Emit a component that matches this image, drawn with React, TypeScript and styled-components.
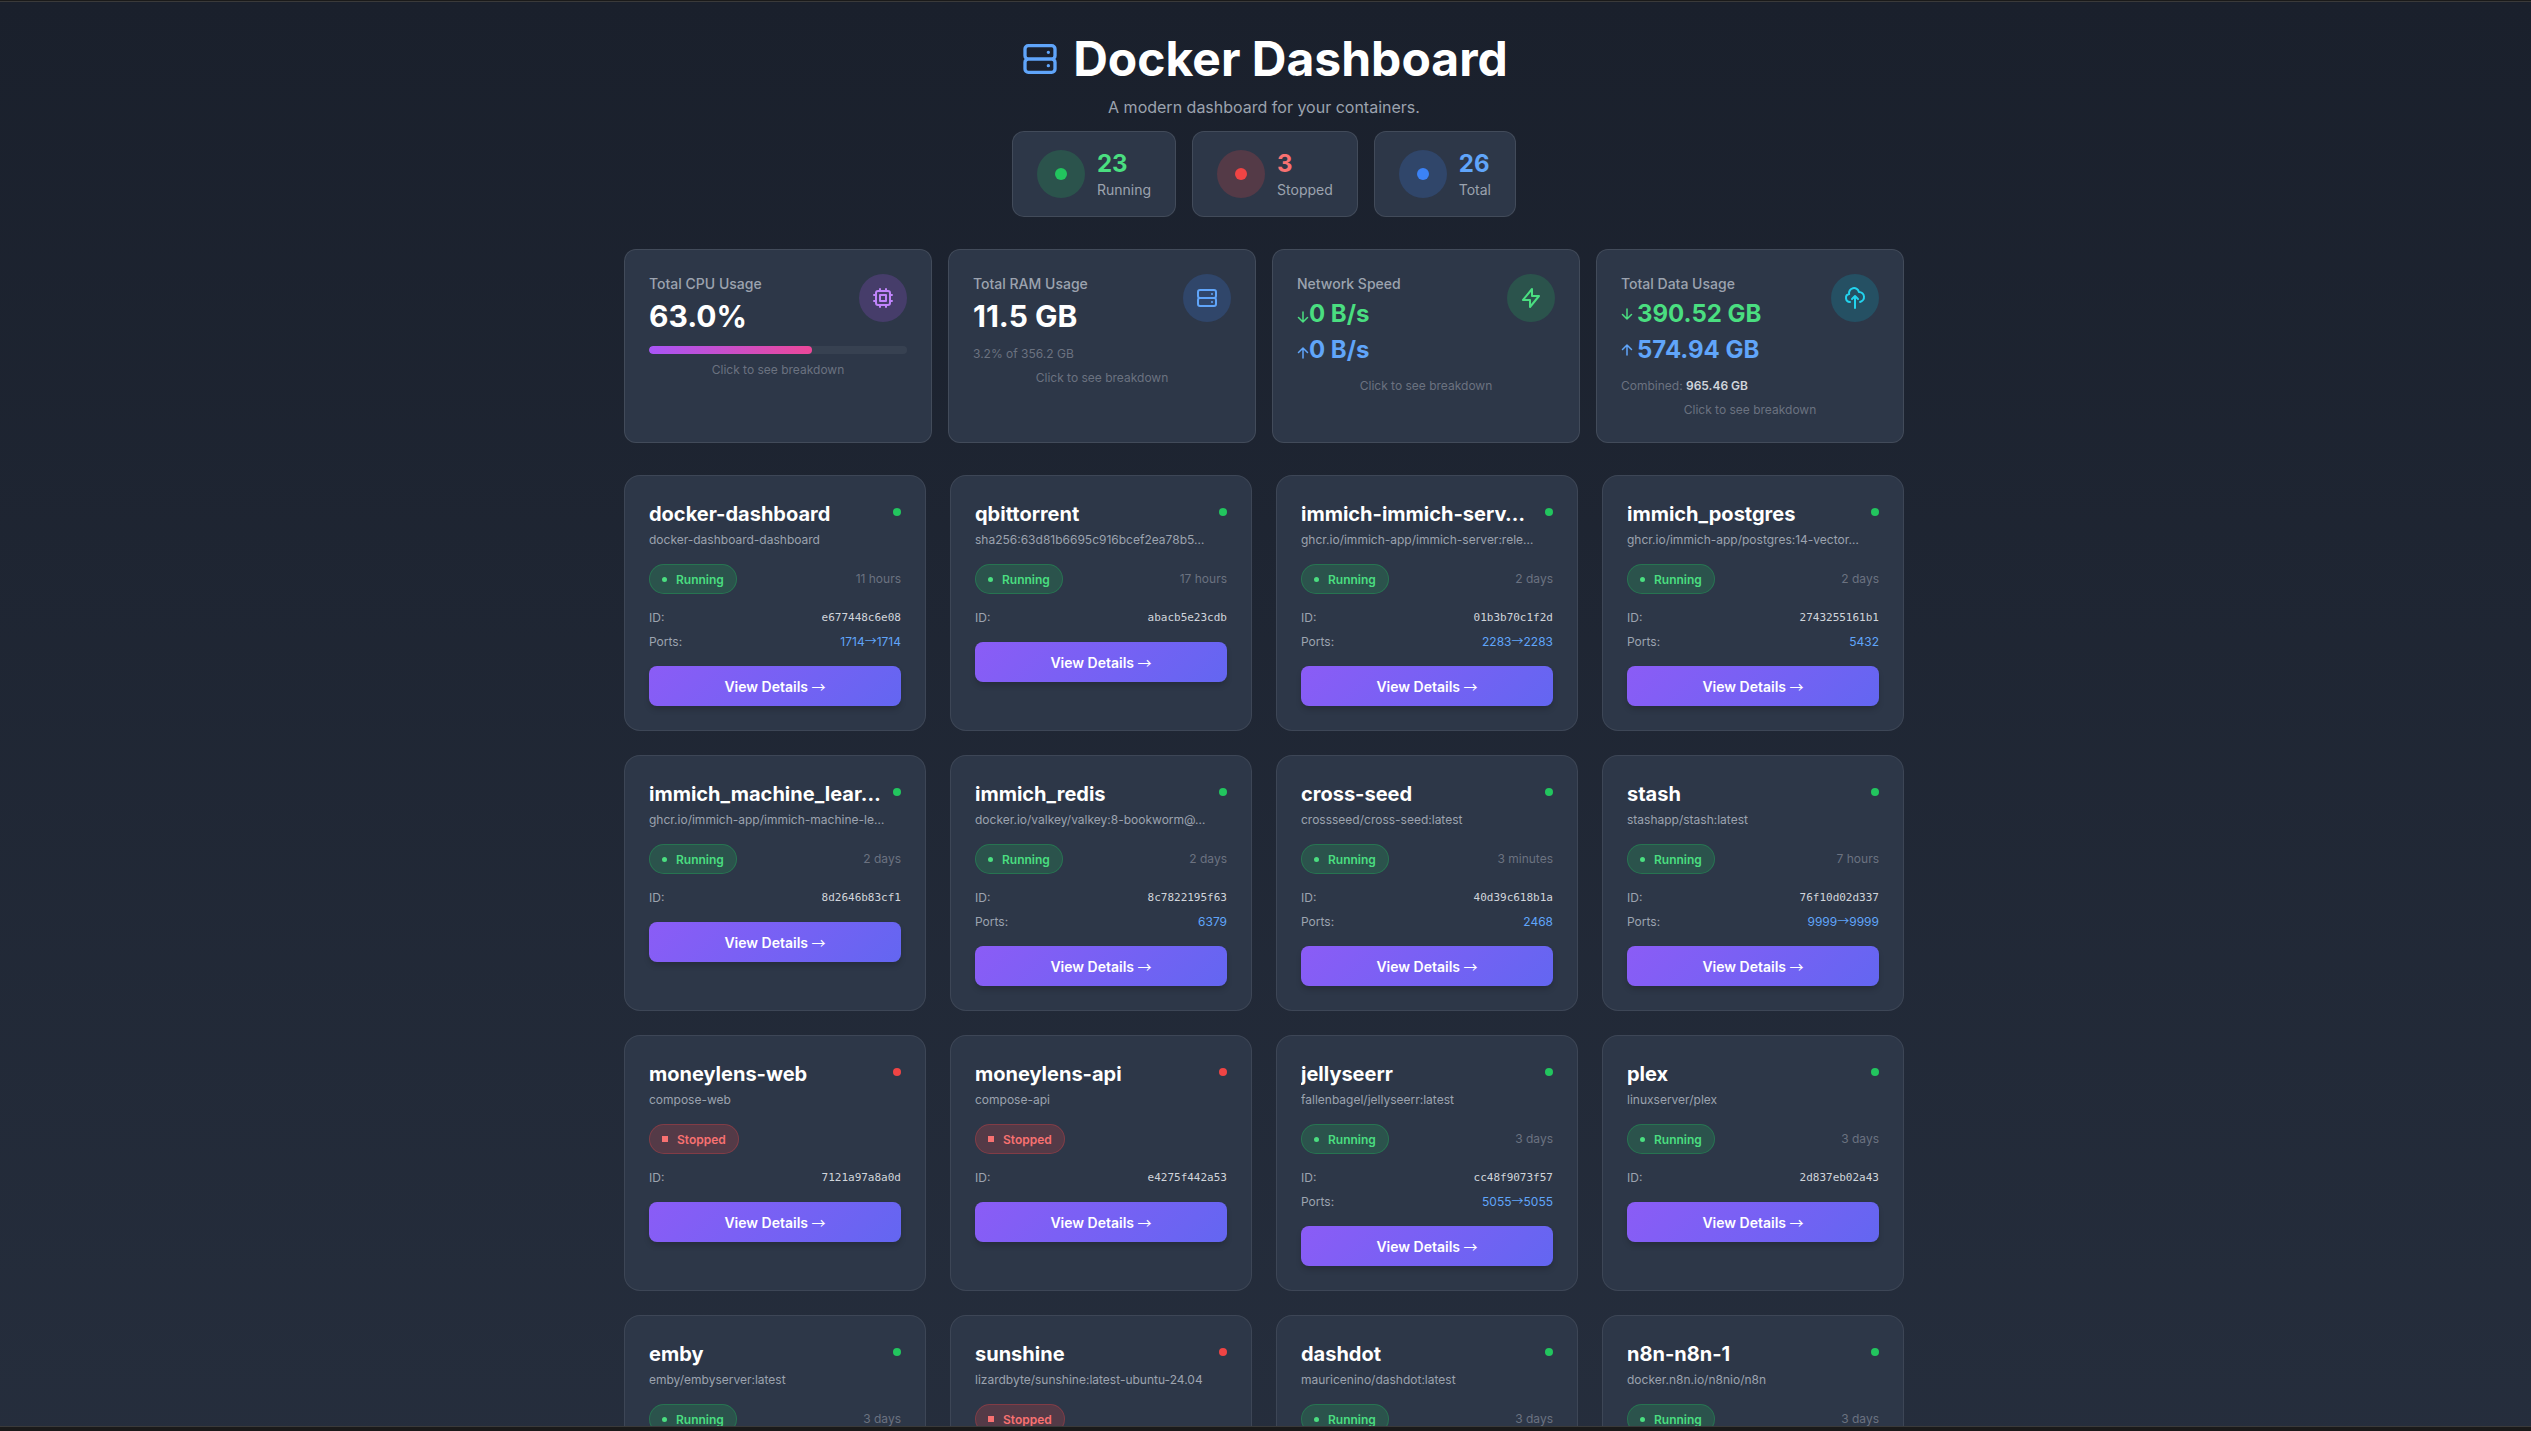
import React from 'react';
import styled, { createGlobalStyle } from 'styled-components';

const GlobalStyle = createGlobalStyle`
  html, body, #root {
    margin: 0;
    height: 100%;
  }
  body {
    overflow: hidden;
    background: #1a1a1a;
    font-family: Inter, "Noto Sans", sans-serif;
    color: #fff;
  }
  * {
    box-sizing: border-box;
  }
`;

const Frame = styled.div`
  height: 100vh;
  display: flex;
  flex-direction: column;
`;

const FrameEdge = styled.div<{ $side: 'top' | 'bottom' }>`
  flex: none;
  height: ${(p) => (p.$side === 'top' ? '2px' : '5px')};
  background: #1a1a1a;
  border-${(p) => (p.$side === 'top' ? 'bottom' : 'top')}: 1px solid #3a3a3a;
`;

const Viewport = styled.main`
  flex: 1;
  min-height: 0;
  overflow: hidden;
  padding: 32px 3px 32px 0;
  background: linear-gradient(180deg, #1a202c 0%, #2d3748 100%);
  background-size: 100% 2443px;
  background-repeat: no-repeat;
`;

const Container = styled.div`
  width: 1280px;
  margin: 0 auto;
`;

const Header = styled.header`
  display: flex;
  flex-direction: column;
  align-items: center;
`;

const TitleRow = styled.div`
  display: flex;
  align-items: center;
  gap: 13px;
  margin-top: 1px;
`;

const Title = styled.h1`
  margin: 0;
  font-size: 48px;
  line-height: 48px;
  font-weight: 700;
  color: #fff;
`;

const Subtitle = styled.p`
  margin: 12px 0;
  font-size: 16px;
  line-height: 24px;
  color: #9ca3af;
`;

const StatRow = styled.div`
  display: flex;
  gap: 16px;
`;

const StatCard = styled.div`
  display: flex;
  align-items: center;
  gap: 12px;
  padding: 16px 24px;
  background: #2d3748;
  border: 1px solid rgba(255, 255, 255, 0.1);
  border-radius: 12px;
`;

const StatHalo = styled.div<{ $rgb: string }>`
  width: 48px;
  height: 48px;
  flex: none;
  display: flex;
  align-items: center;
  justify-content: center;
  border-radius: 50%;
  background: rgba(${(p) => p.$rgb}, 0.2);
`;

const StatDot = styled.span<{ $rgb: string }>`
  width: 12px;
  height: 12px;
  border-radius: 50%;
  background: rgb(${(p) => p.$rgb});
`;

const StatNumber = styled.div<{ $color: string }>`
  font-size: 24px;
  line-height: 32px;
  font-weight: 700;
  color: ${(p) => p.$color};
`;

const StatLabel = styled.div`
  font-size: 14px;
  line-height: 20px;
  color: #9ca3af;
`;

const SummaryGrid = styled.section`
  display: grid;
  grid-template-columns: repeat(4, 1fr);
  gap: 16px;
  margin-top: 32px;
`;

const SummaryCard = styled.div`
  padding: 24px;
  background: #2d3748;
  border: 1px solid rgba(255, 255, 255, 0.1);
  border-radius: 12px;
`;

const SummaryTop = styled.div`
  display: flex;
  justify-content: space-between;
  align-items: flex-start;
`;

const SummaryLabel = styled.div`
  font-size: 14px;
  line-height: 20px;
  font-weight: 500;
  color: #9ca3af;
`;

const SummaryValue = styled.div`
  margin-top: 4px;
  font-size: 30px;
  line-height: 36px;
  font-weight: 700;
  color: #fff;
`;

const IconHalo = styled.div<{ $rgb: string }>`
  width: 48px;
  height: 48px;
  flex: none;
  display: flex;
  align-items: center;
  justify-content: center;
  border-radius: 50%;
  background: rgba(${(p) => p.$rgb}, 0.2);
`;

const Glyph = styled.svg<{ $color: string }>`
  flex: none;
  fill: none;
  stroke: ${(p) => p.$color};
  stroke-width: 2;
  stroke-linecap: round;
  stroke-linejoin: round;
`;

const Track = styled.div`
  height: 8px;
  margin-top: 12px;
  border-radius: 4px;
  background: rgba(255, 255, 255, 0.05);
  overflow: hidden;
`;

const TrackFill = styled.div`
  height: 100%;
  border-radius: 4px;
  background: linear-gradient(90deg, #a855f7, #ec4899);
`;

const Hint = styled.div<{ $gap?: number }>`
  margin-top: ${(p) => p.$gap ?? 8}px;
  font-size: 12px;
  line-height: 16px;
  text-align: center;
  color: #6b7280;
`;

const SmallNote = styled.div<{ $gap?: number }>`
  margin-top: ${(p) => p.$gap ?? 12}px;
  font-size: 12px;
  line-height: 16px;
  color: #6b7280;
`;

const NoteStrong = styled.span`
  font-weight: 600;
  color: #d1d5db;
`;

const RateStack = styled.div`
  margin-top: 4px;
  display: flex;
  flex-direction: column;
  gap: 4px;
`;

const Rate = styled.div<{ $color: string; $spaced?: boolean }>`
  display: flex;
  align-items: ${(p) => (p.$spaced ? 'center' : 'flex-end')};
  gap: ${(p) => (p.$spaced ? '4px' : '0')};
  font-size: 24px;
  line-height: 32px;
  font-weight: 700;
  color: ${(p) => p.$color};
`;

const RateArrow = styled.svg<{ $spaced?: boolean }>`
  flex: none;
  fill: none;
  stroke: currentColor;
  stroke-width: 1.5;
  stroke-linecap: round;
  stroke-linejoin: round;
  margin-bottom: ${(p) => (p.$spaced ? '0' : '7px')};
`;

const ContainerGrid = styled.section`
  display: grid;
  grid-template-columns: repeat(4, 1fr);
  gap: 24px;
  margin-top: 32px;
`;

const Card = styled.article`
  min-height: 256px;
  padding: 24px;
  display: flex;
  flex-direction: column;
  background: #2d3748;
  border: 1px solid rgba(255, 255, 255, 0.08);
  border-radius: 16px;
`;

const CardHead = styled.div`
  display: flex;
  justify-content: space-between;
  align-items: flex-start;
  gap: 8px;
`;

const CardTitles = styled.div`
  flex: 1;
  min-width: 0;
`;

const CardName = styled.h3`
  margin: 0;
  font-size: 20px;
  line-height: 28px;
  font-weight: 700;
  color: #fff;
  white-space: nowrap;
  overflow: hidden;
`;

const CardImage = styled.div`
  margin-top: 4px;
  font-size: 12px;
  line-height: 16px;
  color: #9ca3af;
  white-space: nowrap;
  overflow: hidden;
`;

const HeadDot = styled.span<{ $running: boolean }>`
  width: 8px;
  height: 8px;
  flex: none;
  margin-top: 8px;
  border-radius: 50%;
  background: ${(p) => (p.$running ? '#22c55e' : '#ef4444')};
`;

const StatusRow = styled.div`
  margin-top: 16px;
  display: flex;
  justify-content: space-between;
  align-items: center;
`;

const Pill = styled.span<{ $running: boolean }>`
  height: 30px;
  padding: 0 12px;
  display: inline-flex;
  align-items: center;
  gap: 9px;
  border-radius: 15px;
  font-size: 12px;
  font-weight: 600;
  color: ${(p) => (p.$running ? '#4ade80' : '#f87171')};
  background: ${(p) => (p.$running ? 'rgba(34, 197, 94, 0.2)' : 'rgba(239, 68, 68, 0.2)')};
  border: 1px solid ${(p) => (p.$running ? 'rgba(34, 197, 94, 0.3)' : 'rgba(239, 68, 68, 0.3)')};
`;

const PillMark = styled.span<{ $running: boolean }>`
  width: ${(p) => (p.$running ? '5px' : '6px')};
  height: ${(p) => (p.$running ? '5px' : '6px')};
  border-radius: ${(p) => (p.$running ? '50%' : '0')};
  background: currentColor;
`;

const Uptime = styled.span`
  font-size: 12px;
  line-height: 16px;
  color: #6b7280;
`;

const InfoList = styled.div`
  margin-top: 16px;
  display: flex;
  flex-direction: column;
  gap: 8px;
`;

const InfoRow = styled.div`
  display: flex;
  justify-content: space-between;
  font-size: 12px;
  line-height: 16px;
  color: #9ca3af;
`;

const IdValue = styled.span`
  font-family: "DejaVu Sans Mono", "Liberation Mono", monospace;
  font-size: 11px;
  color: #d1d5db;
`;

const PortValue = styled.span`
  color: #60a5fa;
`;

/* the arrow in ports and buttons comes from a wider fallback face than Inter */
const LongArrow = styled.span`
  font-family: "Noto Sans CJK JP", sans-serif;
  font-weight: 400;
  line-height: 1;
`;

const DetailsButton = styled.button`
  width: 100%;
  height: 40px;
  margin-top: 16px;
  border: 0;
  border-radius: 8px;
  font-family: inherit;
  font-size: 14px;
  font-weight: 600;
  color: #fff;
  background: linear-gradient(135deg, #8b5cf6, #6366f1);
  box-shadow: 0 4px 6px -1px rgba(0, 0, 0, 0.2);
`;

const SERVER = 'M5 12h14M5 12a2 2 0 01-2-2V6a2 2 0 012-2h14a2 2 0 012 2v4a2 2 0 01-2 2M5 12a2 2 0 00-2 2v4a2 2 0 002 2h14a2 2 0 002-2v-4a2 2 0 00-2-2m-2-4h.01M17 16h.01';
const CPU = 'M9 3v2m6-2v2M9 19v2m6-2v2M5 9H3m2 6H3m18-6h-2m2 6h-2M7 19h10a2 2 0 002-2V7a2 2 0 00-2-2H7a2 2 0 00-2 2v10a2 2 0 002 2zM9 9h6v6H9V9z';
const BOLT = 'M13 10V3L4 14h7v7l9-11h-7z';
const CLOUD = 'M7 16a4 4 0 01-.88-7.903A5 5 0 1115.9 6L16 6a5 5 0 011 9.9M15 13l-3-3m0 0l-3 3m3-3v12';

const Icon: React.FC<{ d: string; size: number; color: string }> = ({ d, size, color }) => (
  <Glyph $color={color} width={size} height={size} viewBox="0 0 24 24">
    <path d={d} />
  </Glyph>
);

const RateLine: React.FC<{ up?: boolean; spaced?: boolean; color: string; value: string }> = ({ up, spaced, color, value }) => (
  <Rate $color={color} $spaced={spaced}>
    <RateArrow $spaced={spaced} width="12" height="12" viewBox="0 0 12 12">
      <path d={up ? 'M6 11V1M1.5 5.5L6 1l4.5 4.5' : 'M6 1v10M1.5 6.5L6 11l4.5-4.5'} />
    </RateArrow>
    {value}
  </Rate>
);

type Box = {
  name: string;
  image: string;
  running?: boolean;
  uptime?: string;
  id?: string;
  ports?: [string, string?];
};

const boxes: Box[] = [
  { name: 'docker-dashboard', image: 'docker-dashboard-dashboard', running: true, uptime: '11 hours', id: 'e677448c6e08', ports: ['1714', '1714'] },
  { name: 'qbittorrent', image: 'sha256:63d81b6695c916bcef2ea78b5…', running: true, uptime: '17 hours', id: 'abacb5e23cdb' },
  { name: 'immich-immich-serv…', image: 'ghcr.io/immich-app/immich-server:rele…', running: true, uptime: '2 days', id: '01b3b70c1f2d', ports: ['2283', '2283'] },
  { name: 'immich_postgres', image: 'ghcr.io/immich-app/postgres:14-vector…', running: true, uptime: '2 days', id: '2743255161b1', ports: ['5432'] },
  { name: 'immich_machine_lear…', image: 'ghcr.io/immich-app/immich-machine-le…', running: true, uptime: '2 days', id: '8d2646b83cf1' },
  { name: 'immich_redis', image: 'docker.io/valkey/valkey:8-bookworm@…', running: true, uptime: '2 days', id: '8c7822195f63', ports: ['6379'] },
  { name: 'cross-seed', image: 'crossseed/cross-seed:latest', running: true, uptime: '3 minutes', id: '40d39c618b1a', ports: ['2468'] },
  { name: 'stash', image: 'stashapp/stash:latest', running: true, uptime: '7 hours', id: '76f10d02d337', ports: ['9999', '9999'] },
  { name: 'moneylens-web', image: 'compose-web', id: '7121a97a8a0d' },
  { name: 'moneylens-api', image: 'compose-api', id: 'e4275f442a53' },
  { name: 'jellyseerr', image: 'fallenbagel/jellyseerr:latest', running: true, uptime: '3 days', id: 'cc48f9073f57', ports: ['5055', '5055'] },
  { name: 'plex', image: 'linuxserver/plex', running: true, uptime: '3 days', id: '2d837eb02a43' },
  { name: 'emby', image: 'emby/embyserver:latest', running: true, uptime: '3 days' },
  { name: 'sunshine', image: 'lizardbyte/sunshine:latest-ubuntu-24.04' },
  { name: 'dashdot', image: 'mauricenino/dashdot:latest', running: true, uptime: '3 days' },
  { name: 'n8n-n8n-1', image: 'docker.n8n.io/n8nio/n8n', running: true, uptime: '3 days' },
];

const stats = [
  { value: '23', label: 'Running', rgb: '34, 197, 94', color: '#4ade80' },
  { value: '3', label: 'Stopped', rgb: '239, 68, 68', color: '#f87171' },
  { value: '26', label: 'Total', rgb: '59, 130, 246', color: '#60a5fa' },
];

const GREEN = '#4ade80';
const BLUE = '#60a5fa';

const ContainerCard: React.FC<{ box: Box }> = ({ box }) => {
  const running = Boolean(box.running);
  return (
    <Card>
      <CardHead>
        <CardTitles>
          <CardName>{box.name}</CardName>
          <CardImage>{box.image}</CardImage>
        </CardTitles>
        <HeadDot $running={running} />
      </CardHead>
      <StatusRow>
        <Pill $running={running}>
          <PillMark $running={running} />
          {running ? 'Running' : 'Stopped'}
        </Pill>
        {box.uptime && <Uptime>{box.uptime}</Uptime>}
      </StatusRow>
      {box.id && (
        <>
          <InfoList>
            <InfoRow>
              <span>ID:</span>
              <IdValue>{box.id}</IdValue>
            </InfoRow>
            {box.ports && (
              <InfoRow>
                <span>Ports:</span>
                <PortValue>
                  {box.ports[0]}
                  {box.ports[1] && (
                    <>
                      <LongArrow>→</LongArrow>
                      {box.ports[1]}
                    </>
                  )}
                </PortValue>
              </InfoRow>
            )}
          </InfoList>
          <DetailsButton>
            View Details <LongArrow>→</LongArrow>
          </DetailsButton>
        </>
      )}
    </Card>
  );
};

const App: React.FC = () => {
  return (
    <Frame>
      <GlobalStyle />
      <FrameEdge $side="top" />
      <Viewport>
        <Container>
          <Header>
            <TitleRow>
              <Icon d={SERVER} size={40} color={BLUE} />
              <Title>Docker Dashboard</Title>
            </TitleRow>
            <Subtitle>A modern dashboard for your containers.</Subtitle>
            <StatRow>
              {stats.map((s) => (
                <StatCard key={s.label}>
                  <StatHalo $rgb={s.rgb}>
                    <StatDot $rgb={s.rgb} />
                  </StatHalo>
                  <div>
                    <StatNumber $color={s.color}>{s.value}</StatNumber>
                    <StatLabel>{s.label}</StatLabel>
                  </div>
                </StatCard>
              ))}
            </StatRow>
          </Header>

          <SummaryGrid>
            <SummaryCard>
              <SummaryTop>
                <div>
                  <SummaryLabel>Total CPU Usage</SummaryLabel>
                  <SummaryValue>63.0%</SummaryValue>
                </div>
                <IconHalo $rgb="168, 85, 247">
                  <Icon d={CPU} size={24} color="#c084fc" />
                </IconHalo>
              </SummaryTop>
              <Track>
                <TrackFill style={{ width: '63%' }} />
              </Track>
              <Hint>Click to see breakdown</Hint>
            </SummaryCard>

            <SummaryCard>
              <SummaryTop>
                <div>
                  <SummaryLabel>Total RAM Usage</SummaryLabel>
                  <SummaryValue>11.5 GB</SummaryValue>
                </div>
                <IconHalo $rgb="59, 130, 246">
                  <Icon d={SERVER} size={24} color={BLUE} />
                </IconHalo>
              </SummaryTop>
              <SmallNote>3.2% of 356.2 GB</SmallNote>
              <Hint>Click to see breakdown</Hint>
            </SummaryCard>

            <SummaryCard>
              <SummaryTop>
                <div>
                  <SummaryLabel>Network Speed</SummaryLabel>
                  <RateStack>
                    <RateLine color={GREEN} value="0 B/s" />
                    <RateLine up color={BLUE} value="0 B/s" />
                  </RateStack>
                </div>
                <IconHalo $rgb="34, 197, 94">
                  <Icon d={BOLT} size={24} color={GREEN} />
                </IconHalo>
              </SummaryTop>
              <Hint $gap={12}>Click to see breakdown</Hint>
            </SummaryCard>

            <SummaryCard>
              <SummaryTop>
                <div>
                  <SummaryLabel>Total Data Usage</SummaryLabel>
                  <RateStack>
                    <RateLine spaced color={GREEN} value="390.52 GB" />
                    <RateLine spaced up color={BLUE} value="574.94 GB" />
                  </RateStack>
                </div>
                <IconHalo $rgb="6, 182, 212">
                  <Icon d={CLOUD} size={24} color="#22d3ee" />
                </IconHalo>
              </SummaryTop>
              <SmallNote>
                Combined: <NoteStrong>965.46 GB</NoteStrong>
              </SmallNote>
              <Hint>Click to see breakdown</Hint>
            </SummaryCard>
          </SummaryGrid>

          <ContainerGrid>
            {boxes.map((box) => (
              <ContainerCard key={box.name} box={box} />
            ))}
          </ContainerGrid>
        </Container>
      </Viewport>
      <FrameEdge $side="bottom" />
    </Frame>
  );
};

export default App;
